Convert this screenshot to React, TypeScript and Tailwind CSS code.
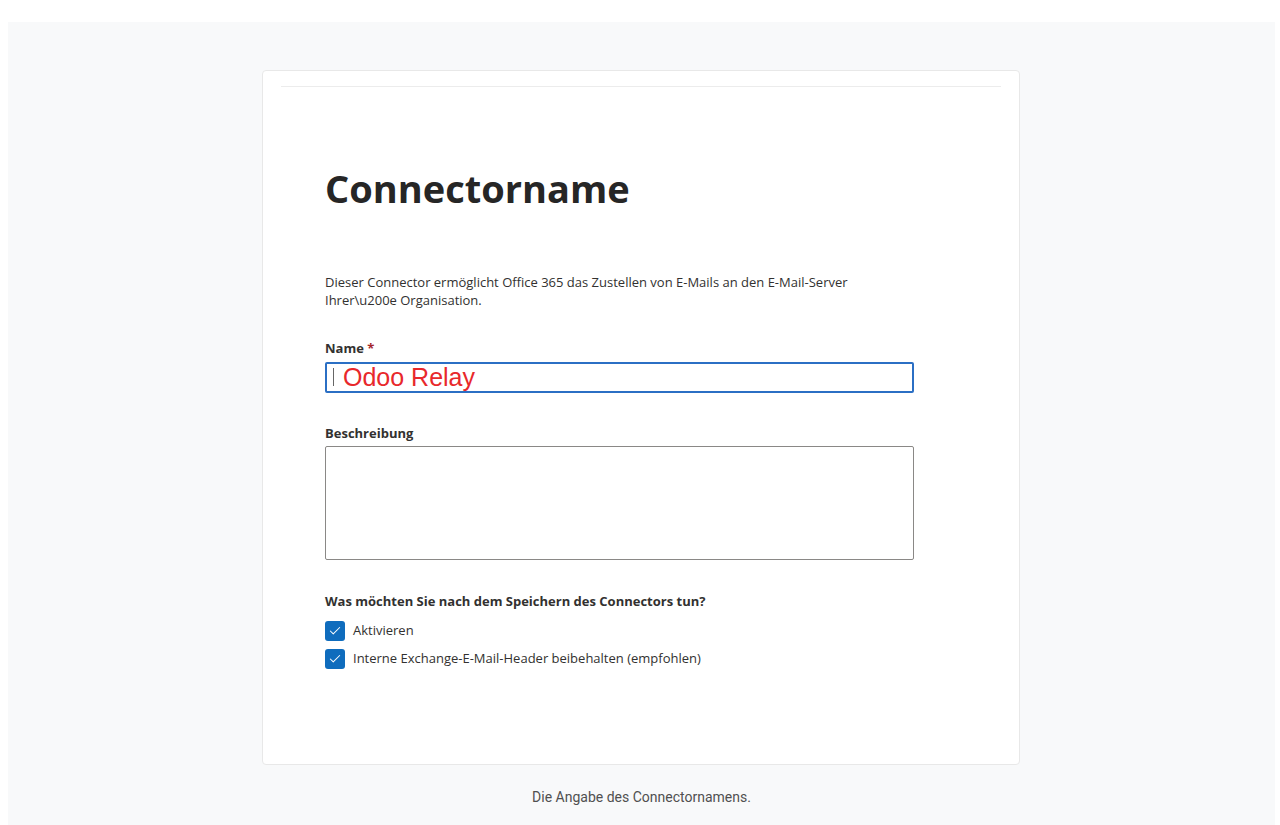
import { Check } from "lucide-react";

const body = { fontFamily: '"Open Sans", "Noto Sans", sans-serif' };

function Box({ label }: { label: string }) {
  return (
    <label className="flex items-center gap-2">
      <span className="flex h-5 w-5 items-center justify-center rounded-[3px] bg-[#0f6cbd]">
        <Check className="h-3.5 w-3.5 text-white" strokeWidth={1.75} />
      </span>
      <span className="text-[13px] text-[#323130]">{label}</span>
    </label>
  );
}

export default function App() {
  return (
    <div className="min-h-[825px] bg-white pt-[22px] pl-2 pr-[5px]" style={body}>
      <div className="flex h-[803px] flex-col bg-[#f8f9fa] pt-12">
        <div className="ml-[254px] h-[695px] w-[758px] rounded-[4px] border border-[#e8e8e8] bg-white px-[18px] pt-[15px]">
          <div className="h-px w-full bg-[#ececec]" />
          <div className="px-[44px] pt-[78px]">
            <h1 className="text-[38px] font-bold leading-[46px] text-[#262626]">Connectorname</h1>
            <p className="mt-[62px] w-[560px] text-[13px] leading-[18px] text-[#323130]">
              Dieser Connector ermöglicht Office 365 das Zustellen von E-Mails an den E-Mail-Server Ihrer\u200e Organisation.
            </p>
            <div className="mt-[30px] text-[13px] font-bold text-[#323130]">
              Name <span className="text-[#a4262c]">*</span>
            </div>
            <div className="mt-[3px] flex h-[31px] w-[589px] items-center rounded-[2px] border-2 border-[#2b6fc4] pl-[6px]">
              <span className="h-[18px] w-px bg-[#666]" />
              <span
                className="ml-[9px] text-[25px] leading-none text-[#e8282b]"
                style={{ fontFamily: '"Liberation Sans", Arial, sans-serif' }}
              >
                Odoo Relay
              </span>
            </div>
            <div className="mt-[31px] text-[13px] font-bold text-[#323130]">Beschreibung</div>
            <div className="mt-[3px] h-[114px] w-[589px] rounded-[2px] border border-[#8a8886]" />
            <div className="mt-[32px] text-[13px] font-bold text-[#323130]">
              Was möchten Sie nach dem Speichern des Connectors tun?
            </div>
            <div className="mt-[9px] flex flex-col gap-2">
              <Box label="Aktivieren" />
              <Box label="Interne Exchange-E-Mail-Header beibehalten (empfohlen)" />
            </div>
          </div>
        </div>
        <p
          className="mt-[22px] text-center text-[14px] text-[#505050]"
          style={{ fontFamily: "Roboto, sans-serif" }}
        >
          Die Angabe des Connectornamens.
        </p>
      </div>
    </div>
  );
}
